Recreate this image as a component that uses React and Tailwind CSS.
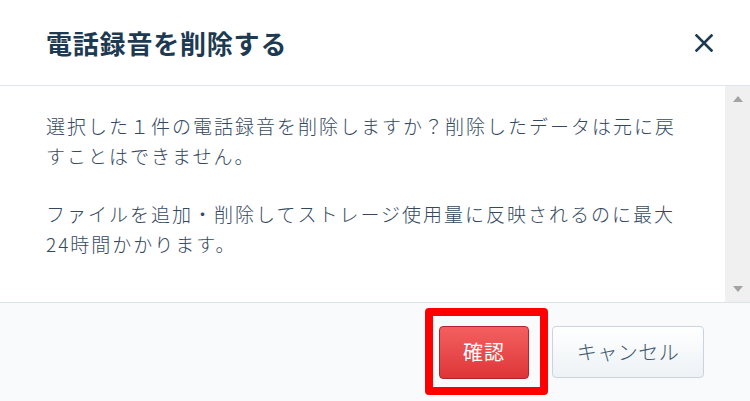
export default function App() {
  const font = { fontFamily: '"Noto Sans CJK JP", "Noto Sans", sans-serif' };
  return (
    <div className="w-[750px] h-[401px] flex flex-col bg-white overflow-hidden" style={font}>
      {/* header */}
      <div className="h-[86px] shrink-0 flex items-center justify-between pl-[46px] pr-[37px] border-b border-[#dfe6eb]">
        <h1 className="text-[26px] tracking-[0.8px] font-bold text-[#1e3a52] leading-none">電話録音を削除する</h1>
        <svg width="18" height="18" viewBox="0 0 18 18" className="block">
          <path d="M1.5 1.5 L16.5 16.5 M16.5 1.5 L1.5 16.5" stroke="#1e3a52" strokeWidth="2.6" strokeLinecap="square" />
        </svg>
      </div>
      {/* body */}
      <div className="h-[217px] shrink-0 flex border-b border-[#dbe4ea]">
        <div className="flex-1 pt-[25px] pl-[46px]">
          <div className="w-[642px] text-[19px] tracking-[2px] leading-[30px] font-light text-[#34495e]">
            <p className="mb-[28px]">選択した１件の電話録音を削除しますか？削除したデータは元に戻すことはできません。</p>
            <p>ファイルを追加・削除してストレージ使用量に反映されるのに最大24時間かかります。</p>
          </div>
        </div>
        <div className="w-[25px] bg-[#f0f0f0] flex flex-col items-center justify-between pt-[10px] pb-[10px]">
          <div className="w-0 h-0 border-l-[5.5px] border-r-[5.5px] border-b-[6px] border-l-transparent border-r-transparent border-b-[#a3a3a3]" />
          <div className="w-0 h-0 border-l-[5.5px] border-r-[5.5px] border-t-[6px] border-l-transparent border-r-transparent border-t-[#a3a3a3]" />
        </div>
      </div>
      {/* footer */}
      <div className="flex-1 bg-[#f8fafb] flex items-center justify-end pr-[46px] gap-[23px]">
        <div className="relative">
          <button className="w-[90px] h-[53px] rounded-[4px] border border-[#b3242a] bg-gradient-to-b from-[#f45f5f] to-[#de3438] text-white text-[20px] tracking-[1px] flex items-center justify-center">
            確認
          </button>
          <div className="absolute -left-[14px] -top-[18px] -right-[19px] -bottom-[16px] border-[8px] border-[#ff0000] rounded-[4px] pointer-events-none" />
        </div>
        <button className="w-[152px] h-[52px] rounded-[4px] border border-[#c9d4dc] bg-gradient-to-b from-white to-[#edf2f5] text-[#3f576e] text-[20px] tracking-[0.5px] font-light flex items-center justify-center">
          キャンセル
        </button>
      </div>
    </div>
  );
}
